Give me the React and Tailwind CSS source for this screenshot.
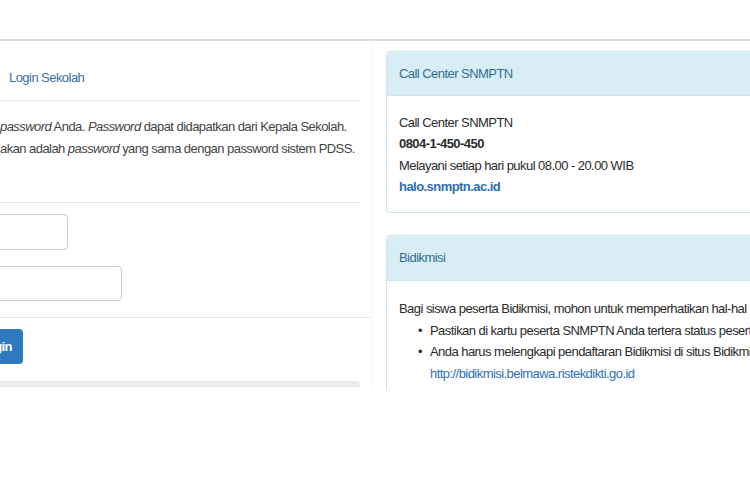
import React from 'react';

const Bullet = ({ children }) => (
    <li className="flex">
        <span className="w-[31px] shrink-0 pl-[19px]">•</span>
        <span className="whitespace-nowrap">{children}</span>
    </li>
);

const App = () => {
    return (
        <div className="w-[750px] h-[500px] bg-white overflow-hidden text-[13px] tracking-[-0.55px] text-[#2b2b2b] font-['Liberation_Sans',Arial,sans-serif]">
            {/* top bar edge */}
            <div className="h-[39px]" />
            <div className="h-[2px] bg-[#dcdcdc]" />

            <div className="flex h-[349px] overflow-hidden">
                {/* Left column: login form */}
                <div className="w-[372px] shrink-0 border-r border-[#f5f6f7]">
                    <div className="w-[360px]">
                        <div className="h-[60px] pt-[26px] pl-[9px] border-b border-[#e6e6e6] text-[#3b6ea5] leading-[21px]">
                            Login Sekolah
                        </div>
                        <div className="h-[102px] pt-[15px] border-b border-[#e6e6e6] text-[#444] leading-[22px] whitespace-nowrap">
                            <p><i>password</i> Anda. <i>Password</i> dapat didapatkan dari Kepala Sekolah.</p>
                            <p>akan adalah <i>password</i> yang sama dengan password sistem PDSS.</p>
                        </div>
                    </div>

                    <div className="h-[115px] pt-[11px] border-b border-[#e6e6e6] flex flex-col gap-[16px]">
                        <div className="-ml-[20px] w-[88px] h-[36px] rounded border border-[#cccccc]" />
                        <div className="-ml-[20px] w-[142px] h-[35px] rounded border border-[#cccccc]" />
                    </div>

                    <div className="pt-[11px]">
                        <button className="-ml-[30px] w-[53px] h-[35px] rounded bg-[#2f79c0] text-white text-right pr-[11px] font-semibold">
                            Login
                        </button>
                    </div>

                    <div className="mt-[17px] w-[360px] h-[6px] rounded-tr bg-[#ebebeb]" />
                </div>

                {/* Right column: info panels */}
                <div className="ml-[14px] pt-[10px] flex flex-col gap-[22px]">
                    <div className="w-[420px] rounded border border-[#cfe3ea]">
                        <div className="h-[44px] flex items-center pl-[12px] bg-[#d9edf7] text-[#31708f] border-b border-[#cfe3ea] rounded-t">
                            Call Center SNMPTN
                        </div>
                        <div className="pt-[16px] pb-[15px] pl-[12px] leading-[21.3px]">
                            <p>Call Center SNMPTN</p>
                            <p className="font-bold">0804-1-450-450</p>
                            <p>Melayani setiap hari pukul 08.00 - 20.00 WIB</p>
                            <p className="font-bold text-[#2d6db2]">halo.snmptn.ac.id</p>
                        </div>
                    </div>

                    <div className="w-[420px] rounded border border-[#cfe3ea]">
                        <div className="h-[45px] flex items-center pl-[12px] bg-[#d9edf7] text-[#31708f] border-b border-[#cfe3ea] rounded-t">
                            Bidikmisi
                        </div>
                        <div className="pt-[17px] pl-[12px] leading-[21.6px]">
                            <p className="whitespace-nowrap">Bagi siswa peserta Bidikmisi, mohon untuk memperhatikan hal-hal berikut:</p>
                            <ul>
                                <Bullet>Pastikan di kartu peserta SNMPTN Anda tertera status peserta Bidikmisi.</Bullet>
                                <Bullet>
                                    Anda harus melengkapi pendaftaran Bidikmisi di situs Bidikmisi
                                    <br />
                                    <span className="text-[#2f6fb5]">http://bidikmisi.belmawa.ristekdikti.go.id</span>
                                </Bullet>
                                <Bullet>Biaya pendaftaran peserta Bidikmisi ditanggung oleh pemerintah.</Bullet>
                            </ul>
                        </div>
                    </div>
                </div>
            </div>
        </div>
    );
};

export default App;
